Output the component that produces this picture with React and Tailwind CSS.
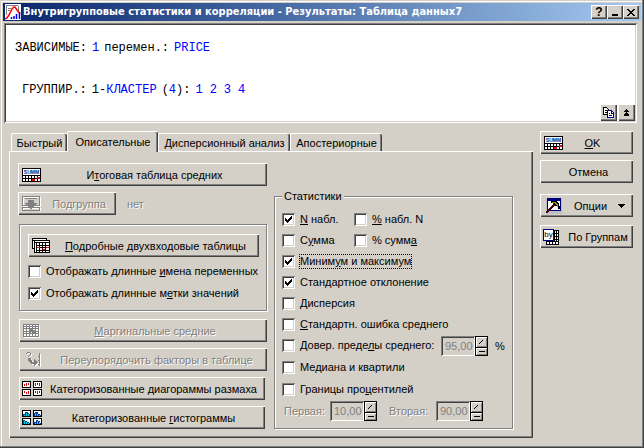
import React from "react";

const RAISED =
  "bg-[#d4d0c8] shadow-[inset_1px_1px_0_#fff,inset_-1px_-1px_0_#404040,inset_-2px_-2px_0_#808080]";
const SUNKEN =
  "shadow-[inset_1px_1px_0_#808080,inset_-1px_-1px_0_#fff,inset_2px_2px_0_#404040,inset_-2px_-2px_0_#d4d0c8]";
const ETCHED = "border border-[#808080] shadow-[inset_1px_1px_0_#fff,1px_1px_0_#fff]";
const DISABLED = "text-[#808080] [text-shadow:1px_1px_0_#fff]";

function Svg({ w, h, children }) {
  return (
    <svg width={w} height={h} viewBox={`0 0 ${w} ${h}`} shapeRendering="crispEdges" className="shrink-0" aria-hidden="true">
      {children}
    </svg>
  );
}

function SummIcon() {
  return (
    <Svg w={19} h={14}>
      <rect width="19" height="14" fill="#000" />
      <rect x="1" y="1" width="17" height="6" fill="#fff" />
      <text x="9.5" y="6" fontSize="5" fontWeight="bold" textAnchor="middle" fill="#00247c" fontFamily="Liberation Sans, sans-serif">
        SUMM
      </text>
      <path d="M1 8h2v2h-2zM4 8h2v2h-2zM7 8h2v2h-2zM10 8h2v2h-2zM13 8h2v2h-2zM16 8h2v2h-2zM1 11h2v2h-2zM4 11h2v2h-2zM7 11h2v2h-2zM10 11h2v2h-2zM13 11h2v2h-2zM16 11h2v2h-2z" fill="#fff" />
      <path d="M10 11h3v2h-3zM15 9h3v2h-3z" fill="#e01010" />
    </Svg>
  );
}

function SubsetIcon() {
  return (
    <Svg w={19} h={16}>
      <path d="M1.500 1.500h17v9h-17zM1.500 12.500h17v2h-17z" fill="none" stroke="#fff" />
      <path d="M.5.500h17v9H.5zM3 2.500h12M.5 11.500h17v3H.5z" fill="none" stroke="#808080" />
      <path d="M6 4h6v3h3v1h-1v1h-1v1h-1v1h-1v1h-1v1H8v-1H7v-1H6v-1H5V9H4V8H3V7h3z" fill="#808080" />
    </Svg>
  );
}

function TablesIcon() {
  return (
    <Svg w={18} h={15}>
      <path d="M0 0h15v11H0z" fill="#000" />
      <path d="M1 1h13v1H1zM1 3h1v7H1z" fill="#fff" />
      <path d="M2 2h16v13H2z" fill="#000" />
      <path d="M3 3h14v1H3zM3 5h1v9H3z" fill="#fff" />
      <path d="M5 5h2v2H5zM8 5h2v2H8zM11 5h2v2h-2zM14 5h3v2h-3zM5 8h2v1H5zM8 8h2v1H8zM11 8h2v1h-2zM14 8h3v1h-3zM5 10h2v2H5zM8 10h2v2H8zM11 10h2v2h-2zM14 10h3v2h-3zM5 13h2v1H5zM8 13h2v1H8zM11 13h2v1h-2zM14 13h3v1h-3z" fill="#fff" />
      <path d="M5 9h3v1H5zM10 11h3v1h-3zM14 9h3v1h-3z" fill="#e01010" />
    </Svg>
  );
}

function MarginalIcon() {
  return (
    <Svg w={17} h={14}>
      <path d="M1 1h16v13H1z" fill="#fff" />
      <path d="M0 0h16v13H0z" fill="#808080" />
      <path d="M1 1h2v1H1zM4 1h2v1H4zM7 1h2v1H7zM10 1h2v1h-2zM13 1h2v1h-2zM1 3h2v1H1zM4 3h2v1H4zM7 3h2v1H7zM10 3h2v1h-2zM13 3h2v1h-2zM1 5h2v2H1zM4 5h2v2H4zM10 5h2v1h-2zM13 5h2v2h-2zM1 8h2v1H1zM4 8h2v1H4zM8 8h1v1H8zM13 8h2v1h-2zM1 10h2v2H1zM4 10h2v2H4zM7 10h2v2H7zM10 10h2v2h-2zM13 10h2v2h-2z" fill="#fff" />
    </Svg>
  );
}

function ReorderIcon() {
  const shape = "M1 0h3v1h1v2H4v1H3v1H2V4h1V3h1V1H1v1H0V1h1zM2 6h3v2h1v2h2V7h1v1h1v1h1v1h1v1h-1v1h-1v1H9v1H8v-2H5v-1H4v-1H3V9H2zM13 1h1v13h-1v-1h-1v-1h1V9h-1V8h1V5h-1V4h1z";
  return (
    <Svg w={16} h={16}>
      <path d={shape} fill="#fff" transform="translate(1 1)" />
      <path d={shape} fill="#808080" />
    </Svg>
  );
}

function FourCharts({ kind }) {
  return (
    <Svg w={20} h={15}>
      <path d="M0 0h9v7H0zM11 0h9v7h-9zM0 8h9v7H0zM11 8h9v7h-9z" fill="#000" />
      <path d="M1 1h7v5H1zM12 1h7v5h-7zM1 9h7v5H1zM12 9h7v5h-7z" fill="#fff" />
      {kind === "box" ? (
        <path d="M2 3h1v2H2zM4 2h1v3H4zM6 2h1v2H6zM13 2h1v3h-1zM15 2h1v2h-1zM17 2h1v3h-1zM2 10h1v2H2zM4 11h1v2H4zM6 10h1v3H6zM13 10h1v2h-1zM15 10h1v3h-1zM17 10h1v2h-1z" fill="#d00000" />
      ) : (
        <>
          <path d="M1 4h2V2h3v1h1v1h1v2H1zM12 3h1V2h3v2h2v1h1v1h-7zM1 10h2v1h2v1h2v1h1v1H1zM12 12h2v-2h2v1h2v2h1v1h-7z" fill="#003c9c" />
          <path d="M2 5h1v1H2zM4 3h1v3H4zM6 4h1v2H6zM13 3h1v3h-1zM15 4h1v2h-1zM17 5h1v1h-1zM2 11h1v3H2zM4 12h1v2H4zM6 13h1v1H6zM13 13h1v1h-1zM15 11h1v3h-1zM17 12h1v2h-1z" fill="#00d8f0" />
        </>
      )}
    </Svg>
  );
}

function HammerIcon() {
  return (
    <Svg w={16} h={16}>
      <path d="M0 0h16v16H0z" fill="#c0c0c0" />
      <path d="M1 0h14v13H1z" fill="#000080" />
      <path d="M2 3h12v9H2z" fill="#fff" />
      <path d="M0 13h1v-1h1v-1h1v-1h1V9h1V8h1V7h1V6h2v2H8v1H7v1H6v1H5v1H4v1H3v1H2v1H0z" fill="#4c0000" />
      <path d="M5 3h4V2h1v1h1v1h1v1h1v3h1v3h-2V9h-1V8H9V7H8V6H7V5H5z" fill="#000" />
      <path d="M6 4h4v1h1v1h1v3h-1V7h-1V6H9V5H6z" fill="#a0a000" />
    </Svg>
  );
}

function ByIcon() {
  return (
    <Svg w={16} h={16}>
      <path d="M3 1h13v15H3z" fill="#000" />
      <path d="M12 2h1v2h-1zM14 2h1v2h-1zM14 5h1v2h-1zM12 5h1v2h-1zM14 8h1v2h-1zM12 8h1v2h-1zM14 11h1v1h-1zM12 11h1v1h-1zM13 13h2v2h-2zM10 13h2v2h-2zM7 13h2v2H7zM4 13h2v2H4z" fill="#fff" />
      <path d="M0 0h11v12H0z" fill="#000080" />
      <path d="M1 1h9v10H1z" fill="#fff" />
      <text x="5.5" y="8" fontSize="8" textAnchor="middle" fill="#000" fontFamily="Liberation Sans, sans-serif">
        by
      </text>
    </Svg>
  );
}

function CopyIcon() {
  return (
    <Svg w={11} h={11}>
      <path d="M.5.500h3l2 2v5h-5z" fill="#fff" stroke="#000" />
      <path d="M2 3h2v1H2zM2 5h2v1H2z" fill="#000" />
      <path d="M4.500 3.500h4l2 2v5h-6z" fill="#fff" stroke="#000080" />
      <path d="M8 4h1v2h2v1H8zM6 6h1v1H6zM6 8h3v1H6z" fill="#000080" />
    </Svg>
  );
}

function AppIcon() {
  return (
    <svg width="16" height="16" viewBox="0 0 16 16" className="shrink-0" aria-hidden="true">
      <rect width="16" height="16" fill="#fff" />
      <path d="M1 1.500h12M13.500 2v5M1.500 2v9M3 4.500h3M3 6.500h2" stroke="#808080" fill="none" />
      <path d="M0 14.500h1.500L4 11l3-6 2-2h1l2 3 3 4" fill="none" stroke="#f00" strokeWidth="1.500" />
      <path d="M6.500 15v-2M9 15v-3M11.500 15v-5M14.500 15V8" stroke="#0000f0" strokeWidth="1.500" />
    </svg>
  );
}

function Btn({ icon, children, disabled, className = "", pad = "pl-1" }) {
  return (
    <button disabled={disabled} className={`flex h-[23px] items-center ${pad} ${RAISED} ${disabled ? DISABLED : ""} ${className}`}>
      {icon && <span className="flex w-5 shrink-0 items-center">{icon}</span>}
      <span className="grow text-center">{children}</span>
    </button>
  );
}

function Check({ checked, children, focus, className = "" }) {
  return (
    <label className={`flex items-center gap-1 ${className}`}>
      <span className="relative flex size-[13px] shrink-0">
        <input type="checkbox" defaultChecked={checked} className={`peer size-[13px] appearance-none bg-white outline-none ${SUNKEN}`} />
        <svg width="13" height="13" viewBox="0 0 13 13" shapeRendering="crispEdges" className="pointer-events-none absolute inset-0 hidden peer-checked:block" aria-hidden="true">
          <path d="M3 5h1v1h1v1h1V6h1V5h1V4h1V3h1v3H9v1H8v1H7v1H6v1H5V9H4V8H3z" />
        </svg>
      </span>
      <span className={`border border-dotted leading-[13px] ${focus ? "border-black" : "border-transparent"}`}>{children}</span>
    </label>
  );
}

function Spin({ value, label }) {
  const half =
    "flex grow items-center justify-center bg-[#d4d0c8] shadow-[inset_1px_1px_0_#fff,inset_-1px_-1px_0_#808080] disabled:text-black";
  return (
    <span className="flex items-center">
      <input disabled aria-label={label} defaultValue={value} className={`h-5 w-[34px] bg-[#d4d0c8] pl-1 text-[11px] text-[#808080] ${SUNKEN}`} />
      <span className="flex h-5 w-[13px] flex-col gap-px border border-black bg-black">
        <button disabled aria-label="Больше" className={half}>
          <Svg w={5} h={4}>
            <path d="M0 3h1v1H0zM1 2h1v1H1zM2 1h1v1H2zM3 0h1v1H3z" />
          </Svg>
        </button>
        <button disabled aria-label="Меньше" className={half}>
          <Svg w={6} h={1}>
            <path d="M0 0h6v1H0z" />
          </Svg>
        </button>
      </span>
    </span>
  );
}

function Tab({ children, active }) {
  return (
    <button
      role="tab"
      aria-selected={!!active}
      className={`rounded-t-[2px] border-t border-l border-t-white border-l-white bg-[#d4d0c8] shadow-[inset_-1px_0_0_#404040,inset_-2px_0_0_#808080] ${
        active ? "relative z-10 -mb-px h-[21px] px-1.5" : "h-[18px] px-1"
      }`}
    >
      {children}
    </button>
  );
}

const U = ({ children }) => <span className="underline underline-offset-1">{children}</span>;

export default function App() {
  return (
    <main className="flex flex-col bg-[#d4d0c8] p-[3px] pb-2.5 font-['Liberation_Sans',Arial,sans-serif] text-[11px] leading-[14px] whitespace-nowrap text-black shadow-[inset_0_-1px_0_#404040,inset_-1px_0_0_#404040,inset_-2px_-2px_0_#808080,inset_1px_1px_0_#d4d0c8,inset_2px_2px_0_#fff]">
      <header className="flex h-[18px] items-center bg-linear-to-r from-[#0a246a] to-[#a6caf0] px-0.5">
        <AppIcon />
        <h1 className="grow pl-0.5 font-['DejaVu_Sans_Condensed','DejaVu_Sans',sans-serif] text-[11px] font-bold text-white">
          Внутригрупповые статистики и корреляции - Результаты: Таблица данных7
        </h1>
        <div className="flex">
          <button aria-label="Справка" className={`flex h-[14px] w-4 items-center justify-center text-[12px] font-bold ${RAISED}`}>
            ?
          </button>
          <button aria-label="Свернуть" className={`flex h-[14px] w-4 items-end justify-center pb-[3px] ${RAISED}`}>
            <Svg w={6} h={2}>
              <path d="M0 0h6v2H0z" />
            </Svg>
          </button>
          <button aria-label="Закрыть" className={`flex h-[14px] w-4 items-center justify-center ${RAISED}`}>
            <Svg w={8} h={7}>
              <path d="M0 0h2v1h1v1h2V1h1V0h2v1H7v1H6v1H5v1h1v1h1v1h1v1H6V6H5V5H3v1H2v1H0V6h1V5h1V4h1V3H2V2H1V1H0z" />
            </Svg>
          </button>
        </div>
      </header>

      <section className={`mt-0.5 mr-1 ml-px flex h-[100px] items-end bg-white ${SUNKEN}`}>
        <div className="flex grow flex-col gap-7 self-start pt-[18px] pl-[11px] font-['Liberation_Mono','Courier_New',monospace] text-[12px]">
          <p className="flex gap-[5px]">
            <span>ЗАВИСИМЫЕ:</span>
            <span className="text-[#0000ff]">1</span>
            <span>перемен.:</span>
            <span className="text-[#0000ff]">PRICE</span>
          </p>
          <p className="flex gap-[5px] pl-[7px]">
            <span>ГРУППИР.:</span>
            <span>
              1-<span className="text-[#0000ff]">КЛАСТЕР</span>
            </span>
            <span>
              (<span className="text-[#0000ff]">4</span>):
            </span>
            <span className="flex gap-[7px] text-[#0000ff]">
              <span>1</span>
              <span>2</span>
              <span>3</span>
              <span>4</span>
            </span>
          </p>
        </div>
        <div className="flex gap-px pr-0.5 pb-0.5">
          <button aria-label="Копировать" className={`flex h-[17px] w-[17px] items-center justify-center ${RAISED}`}>
            <CopyIcon />
          </button>
          <button aria-label="Развернуть" className={`flex h-[17px] w-[17px] items-center justify-center ${RAISED}`}>
            <Svg w={5} h={7}>
              <path d="M2 0h1v1h1v1h1v1H3v1h1v1h1v1H0V5h1V4h1V3H0V2h1V1h1zM0 6h5v1H0z" />
            </Svg>
          </button>
        </div>
      </section>

      <div className="mt-2 flex pr-2 pl-1.5">
        <div className="flex grow flex-col">
          <div role="tablist" className="grid grid-cols-[56px_91px_132px_92px] items-end pl-0.5">
            <Tab>Быстрый</Tab>
            <Tab active>Описательные</Tab>
            <Tab>Дисперсионный анализ</Tab>
            <Tab>Апостериорные</Tab>
          </div>
          <div className={`flex gap-[7px] px-[9px] pt-3 pb-[9px] ${RAISED}`}>
            <div className="flex w-[249px] flex-col">
              <Btn icon={<SummIcon />}>
                И<U>т</U>оговая таблица средних
              </Btn>
              <div className={`mt-1.5 flex items-center gap-[11px] ${DISABLED}`}>
                <Btn disabled icon={<SubsetIcon />} className="w-[98px]">
                  Подгруппа
                </Btn>
                <span>нет</span>
              </div>
              <div className={`mt-[9px] ml-px flex h-[87px] flex-col px-2 pt-[9px] ${ETCHED}`}>
                <Btn icon={<TablesIcon />} className="w-[231px]">
                  <U>П</U>одробные двухвходовые таблицы
                </Btn>
                <Check className="mt-[7px]">
                  Отображать длинные <U>и</U>мена переменных
                </Check>
                <Check checked className="mt-[7px]">
                  Отображать длинные м<U>е</U>тки значений
                </Check>
              </div>
              <div className="mt-2 ml-px flex flex-col gap-1.5">
                <Btn disabled icon={<MarginalIcon />}>
                  <U>М</U>аргинальные средние
                </Btn>
                <Btn disabled icon={<ReorderIcon />} pad="pl-[7px]">
                  Переупорядочить факторы в таблице
                </Btn>
                <Btn icon={<FourCharts kind="box" />} pad="pl-[3px]" className="mr-0.5">
                  Категоризованные <U>д</U>иагораммы размаха
                </Btn>
                <Btn icon={<FourCharts kind="bars" />} pad="pl-[3px]" className="mr-0.5">
                  Категоризованные <U>г</U>истограммы
                </Btn>
              </div>
            </div>

            <fieldset className={`mt-[33px] h-[233px] w-[237px] px-[7px] ${ETCHED}`}>
              <legend className="float-left -mt-2 bg-[#d4d0c8] px-0.5">Статистики</legend>
              <div className="clear-both flex flex-col pt-1.5">
                <div className="grid h-[21px] grid-cols-[72px_1fr] items-center">
                  <Check checked>
                    <U>N</U> набл.
                  </Check>
                  <Check>
                    <U>%</U> набл. N
                  </Check>
                </div>
                <div className="grid h-[21px] grid-cols-[72px_1fr] items-center">
                  <Check>
                    С<U>у</U>мма
                  </Check>
                  <Check>
                    % сумм<U>а</U>
                  </Check>
                </div>
                <Check checked focus className="h-[21px]">
                  Миним<U>у</U>м и максимум
                </Check>
                <Check checked className="h-[21px]">
                  Стан<U>д</U>артное отклонение
                </Check>
                <Check className="h-[21px]">
                  <U>Д</U>исперсия
                </Check>
                <Check className="h-[21px]">
                  <U>С</U>тандартн. ошибка среднего
                </Check>
                <div className="flex h-[21px] items-center">
                  <Check className="w-[159px]">
                    Довер. преде<U>л</U>ы среднего:
                  </Check>
                  <Spin value="95,00" label="Доверительные пределы" />
                  <span className="pl-[7px]">%</span>
                </div>
                <Check className="h-[22px]">Медиана и квартили</Check>
                <Check className="h-[22px]">
                  Границы про<U>ц</U>ентилей
                </Check>
                <div className="flex h-[22px] items-center">
                  <span className={`w-12 pl-0.5 ${DISABLED}`}>Первая:</span>
                  <Spin value="10,00" label="Первая" />
                  <span className={`w-[59px] pl-3 ${DISABLED}`}>Вторая:</span>
                  <Spin value="90,00" label="Вторая" />
                </div>
              </div>
            </fieldset>
          </div>
        </div>

        <aside className="ml-[7px] flex w-[93px] shrink-0 flex-col gap-1.5">
          <Btn icon={<SummIcon />}>
            <span className="pr-3">
              <U>O</U>K
            </span>
          </Btn>
          <Btn>Отмена</Btn>
          <Btn icon={<HammerIcon />} pad="pl-1.5" className="mt-[5px]">
            <span className="flex items-center justify-center gap-[11px]">
              Опции
              <Svg w={7} h={4}>
                <path d="M0 0h7v1H6v1H5v1H4v1H3V3H2V2H1V1H0z" />
              </Svg>
            </span>
          </Btn>
          <Btn icon={<ByIcon />} pad="pl-[3px]" className="mt-[2px]">
            По Группам
          </Btn>
        </aside>
      </div>
    </main>
  );
}
